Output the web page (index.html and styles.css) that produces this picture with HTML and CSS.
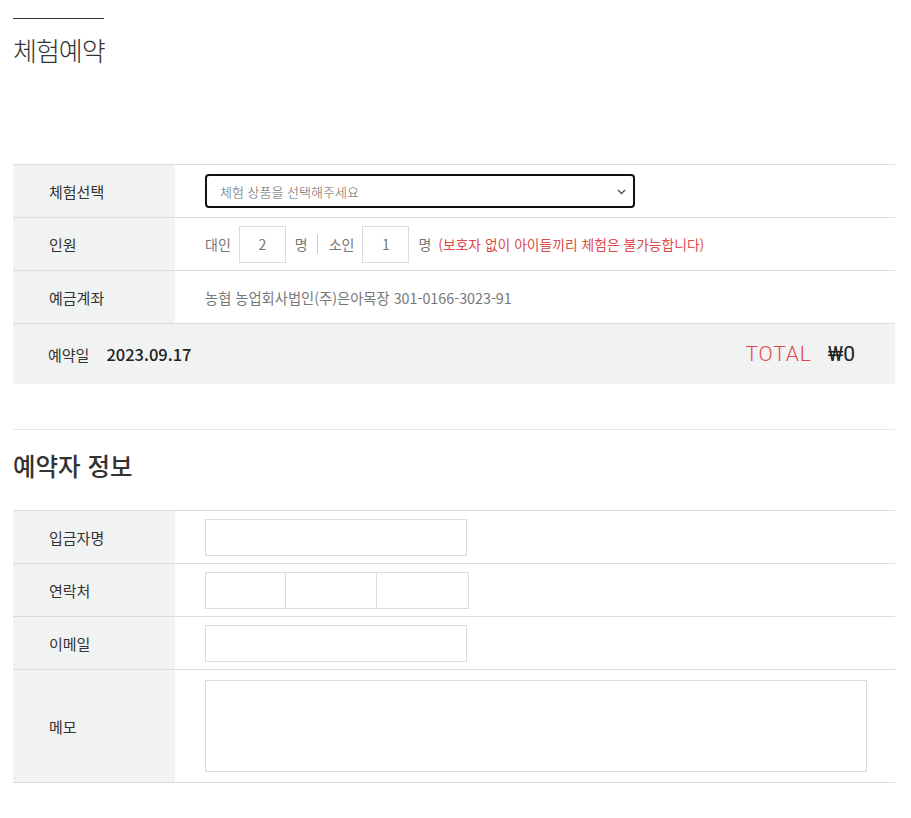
FILE: index.html
```html
<!DOCTYPE html>
<html lang="ko">
<head>
<meta charset="utf-8">
<title>체험예약</title>
<link rel="stylesheet" href="styles.css">
</head>
<body>
<div class="page">
  <div class="title-line"></div>
  <h1 class="page-title">체험예약</h1>

  <div class="form-table first">
    <div class="row">
      <div class="label">체험선택</div>
      <div class="field">
        <div class="select">
          <span>체험 상품을 선택해주세요</span>
          <svg class="chev" width="9" height="6" viewBox="0 0 9 6"><path d="M1 1l3.5 3.5L8 1" fill="none" stroke="#555" stroke-width="1.5"/></svg>
        </div>
      </div>
    </div>
    <div class="row">
      <div class="label">인원</div>
      <div class="field people">
        <span class="muted">대인</span>
        <span class="num-box">2</span>
        <span class="muted">명</span>
        <span class="divider"></span>
        <span class="muted">소인</span>
        <span class="num-box">1</span>
        <span class="muted">명</span>
        <span class="warn">(보호자 없이 아이들끼리 체험은 불가능합니다)</span>
      </div>
    </div>
    <div class="row">
      <div class="label">예금계좌</div>
      <div class="field account">농협 농업회사법인(주)은아목장 301-0166-3023-91</div>
    </div>
  </div>

  <div class="summary">
    <div class="date"><span class="date-label">예약일</span><span class="date-value">2023.09.17</span></div>
    <div class="total"><span class="total-label">TOTAL</span><span class="total-value">₩0</span></div>
  </div>

  <hr class="sep">

  <h2 class="section-title">예약자 정보</h2>

  <div class="form-table">
    <div class="row">
      <div class="label">입금자명</div>
      <div class="field"><div class="input"></div></div>
    </div>
    <div class="row">
      <div class="label">연락처</div>
      <div class="field">
        <div class="phone">
          <div class="ph ph1"></div><div class="ph ph2"></div><div class="ph ph3"></div>
        </div>
      </div>
    </div>
    <div class="row">
      <div class="label">이메일</div>
      <div class="field"><div class="input"></div></div>
    </div>
    <div class="row memo-row">
      <div class="label">메모</div>
      <div class="field"><div class="textarea"></div></div>
    </div>
  </div>
</div>
</body>
</html>
```

FILE: styles.css
```css
* { box-sizing: border-box; }
body {
  margin: 0;
  background: #fff;
  font-family: "Noto Sans CJK KR", "Noto Sans", sans-serif;
  color: #333;
}
.page {
  width: 882px;
  margin-left: 13px;
  padding-top: 18px;
  padding-bottom: 34px;
}
.title-line {
  width: 91px;
  height: 1px;
  background: #333;
}
.page-title {
  margin: 13px 0 0;
  font-size: 26px;
  line-height: 36px;
  font-weight: 300;
  color: #333;
  letter-spacing: -1px;
}
.form-table {
  border-top: 1px solid #dcdcdc;
}
.form-table.first { margin-top: 96px; }
.row {
  display: grid;
  grid-template-columns: 162px 1fr;
  height: 53px;
  border-bottom: 1px solid #dcdcdc;
}
.label {
  background: #f1f2f2;
  display: flex;
  align-items: center;
  padding-left: 36px;
  font-size: 15px;
  color: #333;
}
.field {
  display: flex;
  align-items: center;
  padding-left: 30px;
}
.select {
  width: 430px;
  height: 34px;
  border: 2px solid #111;
  border-radius: 4px;
  display: flex;
  align-items: center;
  justify-content: space-between;
  padding: 0 7px 0 13px;
  font-size: 13px;
  font-weight: 300;
  color: #666;
}
.chev { margin-top: 1px; }
.people { font-size: 14px; }
.muted { color: #777; }
.num-box {
  width: 47px;
  height: 37px;
  border: 1px solid #dcdcdc;
  display: flex;
  align-items: center;
  justify-content: center;
  color: #777;
  margin: 0 9px 0 8px;
}
.divider {
  width: 1px;
  height: 20px;
  background: #ccc;
  margin: 0 11px 0 9px;
}
.warn {
  color: #e04a4a;
  margin-left: 7px;
  font-size: 13.8px;
}
.account {
  font-size: 14.3px;
  color: #777;
}
.summary {
  height: 60px;
  background: #f1f2f2;
  display: flex;
  align-items: center;
  justify-content: space-between;
  padding: 0 40px 0 35px;
}
.date-label { font-size: 15px; color: #333; }
.date-value {
  font-size: 16.5px;
  font-weight: 500;
  color: #222;
  margin-left: 17px;
}
.total { display: flex; align-items: baseline; }
.total-label {
  font-family: Roboto, "Noto Sans", sans-serif;
  font-size: 21px;
  color: #e04a4a;
  letter-spacing: 0.8px;
  font-weight: 300;
}
.total-value {
  font-family: Roboto, "Noto Sans", sans-serif;
  font-size: 21px;
  color: #222;
  margin-left: 16px;
}
.sep {
  border: 0;
  border-top: 1px solid #e8e8e8;
  margin: 45px 0 0;
}
.section-title {
  margin: 18px 0 26px;
  font-size: 24.5px;
  line-height: 36px;
  font-weight: 500;
  color: #333;
}
.input {
  width: 262px;
  height: 37px;
  border: 1px solid #dcdcdc;
}
.phone {
  display: flex;
  height: 37px;
  border: 1px solid #dcdcdc;
  width: 264px;
}
.ph { height: 100%; }
.ph1 { width: 80px; border-right: 1px solid #dcdcdc; }
.ph2 { width: 91px; border-right: 1px solid #dcdcdc; }
.ph3 { flex: 1; }
.memo-row { height: 113px; }
.textarea {
  width: 662px;
  height: 92px;
  border: 1px solid #dcdcdc;
}
```
